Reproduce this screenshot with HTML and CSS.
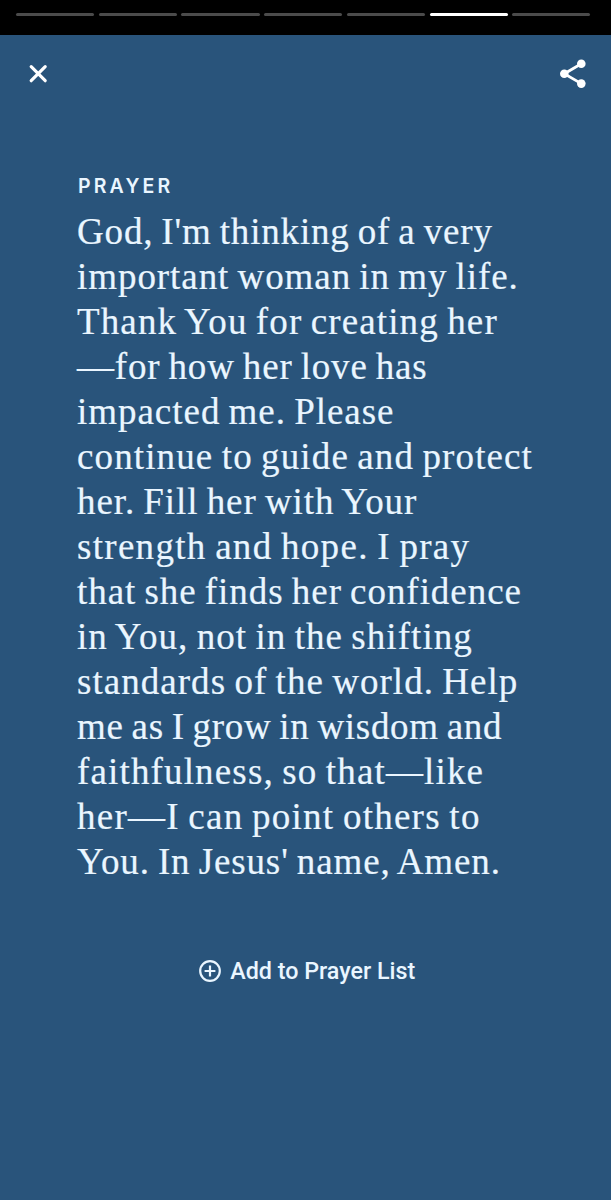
FILE: index.html
```html
<!DOCTYPE html>
<html lang="en">
<head>
    <meta charset="UTF-8">
    <meta name="viewport" content="width=device-width, initial-scale=1.0">
    <title>Prayer</title>
    <link rel="stylesheet" href="styles.css">
</head>
<body>
    <div class="story">
        <div class="progress">
            <span class="segment"></span>
            <span class="segment"></span>
            <span class="segment"></span>
            <span class="segment"></span>
            <span class="segment"></span>
            <span class="segment active"></span>
            <span class="segment"></span>
        </div>
        <header class="header">
            <button type="button" class="icon-button" aria-label="Close">
                <svg width="20" height="20" viewBox="0 0 20 20">
                    <path d="M3.2 2.7L17.2 16.7M17.2 2.7L3.2 16.7" fill="none" stroke="#fff" stroke-width="3.2" stroke-linecap="round"/>
                </svg>
            </button>
            <button type="button" class="icon-button" aria-label="Share">
                <svg width="28" height="30" viewBox="0 0 28 30">
                    <path d="M21.3 4.8L4.3 14.7L21.3 24.6" fill="none" stroke="#fff" stroke-width="2.8"/>
                    <circle cx="21.3" cy="4.8" r="4.3" fill="#fff"/>
                    <circle cx="4.3" cy="14.7" r="4.3" fill="#fff"/>
                    <circle cx="21.3" cy="24.6" r="4.3" fill="#fff"/>
                </svg>
            </button>
        </header>
        <main class="content">
            <h1 class="label">PRAYER</h1>
            <p class="prayer">
                <span class="line l1">God, I'm thinking of a very</span>
                <span class="line l2">important woman in my life.</span>
                <span class="line l3">Thank You for creating her</span>
                <span class="line l4">—for how her love has</span>
                <span class="line l5">impacted me. Please</span>
                <span class="line l6">continue to guide and protect</span>
                <span class="line l7">her. Fill her with Your</span>
                <span class="line l8">strength and hope. I pray</span>
                <span class="line l9">that she finds her confidence</span>
                <span class="line l10">in You, not in the shifting</span>
                <span class="line l11">standards of the world. Help</span>
                <span class="line l12">me as I grow in wisdom and</span>
                <span class="line l13">faithfulness, so that—like</span>
                <span class="line l14">her—I can point others to</span>
                <span class="line l15">You. In Jesus' name, Amen.</span>
            </p>
        </main>
        <button type="button" class="add-button">
            <svg width="24" height="24" viewBox="0 0 24 24">
                <circle cx="12" cy="12" r="9.8" fill="none" stroke="#eaf6ff" stroke-width="2.2"/>
                <path d="M12 6.6V17.4M6.6 12H17.4" fill="none" stroke="#eaf6ff" stroke-width="2.2"/>
            </svg>
            <span>Add to Prayer List</span>
        </button>
    </div>
</body>
</html>
```
FILE: styles.css
```css
body {
    margin: 0;
    background-color: #29547b;
}

button {
    display: flex;
    align-items: center;
    padding: 0;
    border: none;
    background: none;
    cursor: pointer;
}

.story {
    display: flex;
    flex-direction: column;
    min-height: 1200px;
    background-color: #29547b;
    color: #eaf6ff;
}

/* Progress bar */
.progress {
    display: flex;
    gap: 4.7px;
    height: 35px;
    padding: 12.5px 20.5px 0 16px;
    box-sizing: border-box;
    background-color: #000;
}

.segment {
    flex: 1;
    height: 3px;
    border-radius: 2px;
    background-color: #4b4b4b;
}

.segment.active {
    background-color: #fff;
}

/* Header */
.header {
    display: flex;
    justify-content: space-between;
    align-items: center;
    height: 77px;
    padding: 0 23px 0 28px;
}

/* Prayer text */
.content {
    padding: 62px 0 0 77px;
}

.label {
    margin: 0 0 0 1px;
    font-family: Inter, sans-serif;
    font-size: 19.5px;
    font-weight: 600;
    line-height: 24px;
    letter-spacing: 3.15px;
}

.prayer {
    margin: 10.5px 0 0;
    font-family: "Liberation Serif", serif;
    font-size: 37px;
    line-height: 45.05px;
    word-spacing: -2px;
    white-space: nowrap;
    -webkit-text-stroke: 0.2px #eaf6ff;
}

.line {
    display: block;
}

.l1 { letter-spacing: 0.83px; }
.l2 { letter-spacing: 0.94px; }
.l3 { letter-spacing: 1.12px; }
.l4 { letter-spacing: 0.83px; }
.l5 { letter-spacing: 0.97px; }
.l6 { letter-spacing: 1.12px; }
.l7 { letter-spacing: 0.93px; }
.l8 { letter-spacing: 1.3px; }
.l9 { letter-spacing: 0.95px; }
.l10 { letter-spacing: 1.06px; }
.l11 { letter-spacing: 1.04px; }
.l12 { letter-spacing: 0.69px; }
.l13 { letter-spacing: 1.15px; }
.l14 { letter-spacing: 1.26px; }
.l15 { letter-spacing: 0.88px; }

/* Add button */
.add-button {
    align-self: center;
    gap: 8.5px;
    margin: 72.5px 0 0 2px;
    color: #eaf6ff;
    font-family: Roboto, sans-serif;
    font-size: 23.3px;
    font-weight: 500;
    line-height: 28px;
}
```
